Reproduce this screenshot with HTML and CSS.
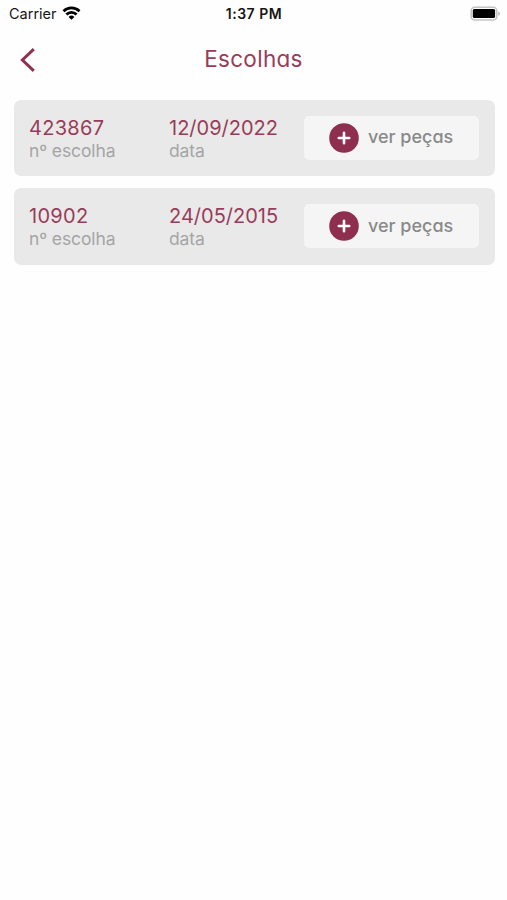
FILE: index.html
```html
<!DOCTYPE html>
<html lang="pt">

<head>
	<meta charset="UTF-8">
	<meta name="viewport" content="width=device-width, initial-scale=1.0">
	<title>Escolhas</title>
	<link rel="stylesheet" href="styles.css">
</head>

<body>
	<div class="status-bar">
		<div class="carrier">
			<span>Carrier</span>
			<svg class="wifi" width="19" height="14" viewBox="0 0 18 14">
				<path d="M1 5.2a11.4 11.4 0 0 1 16 0" />
				<path d="M3.9 8.5a7.2 7.2 0 0 1 10.2 0" />
				<path class="wifi-dot" d="M9 13.8L6.1 10.9a4.1 4.1 0 0 1 5.8 0z" />
			</svg>
		</div>
		<span class="time">1:37 PM</span>
		<svg class="battery" width="31" height="15" viewBox="0 0 31 15">
			<rect x="1.2" y="1.2" width="25.6" height="12.8" rx="3.6" fill="#fff" stroke="#c4c4c4" stroke-width="1.6" />
			<rect x="2.8" y="2.9" width="22.3" height="9.2" rx="1.5" fill="#000" />
			<path d="M28.3 5.4c2.2 1 2.2 3.4 0 4.4z" fill="#b0b0b0" />
		</svg>
	</div>

	<header class="header">
		<a class="back" aria-label="Voltar">
			<svg width="16" height="24" viewBox="0 0 16 24">
				<path d="M13.8 1.2L2.4 12L13.8 22.8" />
			</svg>
		</a>
		<h1 class="title">Escolhas</h1>
	</header>

	<main class="list">
		<div class="card">
			<div class="field">
				<span class="value">423867</span>
				<span class="label">nº escolha</span>
			</div>
			<div class="field">
				<span class="value date">12/09/2022</span>
				<span class="label">data</span>
			</div>
			<button class="button">
				<svg width="30" height="30" viewBox="0 0 30 30">
					<circle cx="15" cy="15" r="14.8" />
					<path d="M15 9.8v10.4M9.8 15h10.4" />
				</svg>
				<span class="button-text">ver peças</span>
			</button>
		</div>
		<div class="card">
			<div class="field">
				<span class="value">10902</span>
				<span class="label">nº escolha</span>
			</div>
			<div class="field">
				<span class="value date">24/05/2015</span>
				<span class="label">data</span>
			</div>
			<button class="button">
				<svg width="30" height="30" viewBox="0 0 30 30">
					<circle cx="15" cy="15" r="14.8" />
					<path d="M15 9.8v10.4M9.8 15h10.4" />
				</svg>
				<span class="button-text">ver peças</span>
			</button>
		</div>
	</main>
</body>

</html>
```

FILE: styles.css
```css
* {
	box-sizing: border-box;
}

body {
	margin: 0;
	background-color: #fefefe;
	font-family: Inter, "Liberation Sans", sans-serif;
}

.status-bar {
	display: grid;
	grid-template-columns: 1fr auto 1fr;
	align-items: center;
	height: 26px;
	padding: 0 6px 0 9px;
	font-size: 14.5px;
	color: #161616;
}

.carrier {
	display: flex;
	align-items: center;
	gap: 5px;
}

.wifi {
	fill: none;
	stroke: #000;
	stroke-width: 2.7;
}

.wifi .wifi-dot {
	fill: #000;
	stroke: none;
}

.time {
	margin-right: 2px;
	font-size: 14px;
	font-weight: 600;
	letter-spacing: 0.5px;
}

.battery {
	justify-self: end;
}

.header {
	display: grid;
	grid-template-columns: 1fr auto 1fr;
	align-items: center;
	height: 66px;
	padding: 0 20px;
}

.back {
	display: flex;
	padding-top: 1px;
}

.back svg {
	fill: none;
	stroke: #92304f;
	stroke-width: 3;
}

.title {
	margin: 0;
	padding-bottom: 1px;
	font-size: 22.5px;
	font-weight: 400;
	letter-spacing: 0.3px;
	font-feature-settings: "cv11";
	color: #983d59;
}

.list {
	display: flex;
	flex-direction: column;
	gap: 12px;
	padding: 7.6px 12.5px 0 13.5px;
}

.card {
	display: grid;
	grid-template-columns: 140px 135px 175px;
	align-items: center;
	height: 76.5px;
	padding-left: 15.5px;
	border-radius: 7px;
	background-color: #e9e9e9;
}

.field {
	display: flex;
	flex-direction: column;
	padding-top: 2px;
}

.value {
	font-size: 20px;
	line-height: 24px;
	letter-spacing: 0.3px;
	color: #983d59;
}

.date {
	letter-spacing: 0;
}

.label {
	font-size: 17.5px;
	line-height: 22px;
	letter-spacing: -0.1px;
	color: #a5a5a5;
}

.button {
	display: flex;
	align-items: center;
	gap: 9px;
	height: 44px;
	padding: 0 0 0 25px;
	border: none;
	border-radius: 5px;
	background-color: #f5f5f5;
	font-family: inherit;
	font-size: 18px;
	font-weight: 500;
	font-feature-settings: "cv11";
	color: #898989;
}

.button-text {
	padding-bottom: 2px;
}

.button circle {
	fill: #8f2f50;
}

.button path {
	fill: none;
	stroke: #fff;
	stroke-width: 2.6;
	stroke-linecap: round;
}
```
